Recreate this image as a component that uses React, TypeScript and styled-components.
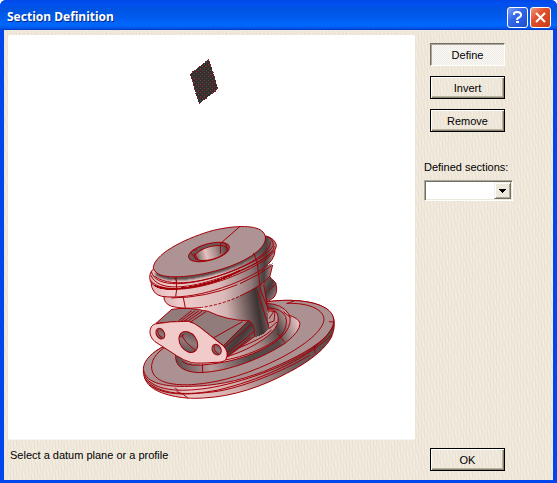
import React from "react";
import styled, { createGlobalStyle, css } from "styled-components";

const GlobalStyle = createGlobalStyle`
  * { box-sizing: border-box; }
  body { margin: 0; background: #fff; font: 11px/14px "Liberation Sans", Arial, sans-serif; color: #000; }
`;

const texture = css`
  background-color: #eee7db;
  background-image:
    repeating-linear-gradient(90deg, rgba(232, 214, 194, 0.3) 0 1px, transparent 1px 3px),
    repeating-linear-gradient(75deg, rgba(255, 252, 232, 0.35) 0 1px, transparent 1px 4px);
`;

const Dialog = styled.main`
  min-height: 100vh;
  display: flex;
  flex-direction: column;
  padding: 0 4px 4px;
  background: #0048ee;
  border-radius: 6px 6px 0 0;
`;

const TitleBar = styled.header`
  height: 30px;
  margin: 0 -4px;
  padding: 4px 6px 0 7px;
  display: flex;
  align-items: center;
  gap: 2px;
  border-radius: 6px 6px 0 0;
  background: linear-gradient(#0048e8 0, #0050f0 4px, #0054e2 9px, #005cee 18px, #0068ff 25px, #0058ea 28px, #0038c8 30px);
`;

const Title = styled.h1`
  flex: 1;
  margin: 0;
  color: #fff;
  font: bold 12px/16px "Noto Sans", "Open Sans", sans-serif;
  text-shadow: 1px 1px 0 #062b88;
`;

const CaptionButton = styled.button<{ $close?: boolean }>`
  width: 21px;
  height: 21px;
  padding: 0;
  display: grid;
  place-items: center;
  border: 1px solid #fff;
  border-radius: 3px;
  background: ${({ $close }) =>
    $close
      ? "linear-gradient(135deg, #f09a80, #e0502c 40%, #c83a14)"
      : "linear-gradient(135deg, #7ca0f8, #3468e8 40%, #1c50d4)"};
`;

const Client = styled.div`
  flex: 1;
  display: grid;
  grid-template-columns: 1fr 138px;
  grid-template-rows: 1fr 40px;
  padding: 5px 0 0 4px;
  ${texture}
`;

const Viewport = styled.section`
  background: #fff;
  border-radius: 2px;
  border-bottom: 1px solid #f8f6f2;
  min-height: 0;
`;

const Drawing = styled.svg`
  display: block;
  width: 100%;
  height: 100%;
`;

const SidePanel = styled.aside`
  display: flex;
  flex-direction: column;
  align-items: flex-start;
  gap: 10px;
  padding: 8px 0 0 15px;
`;

const PushButton = styled.button<{ $pressed?: boolean }>`
  width: 75px;
  height: 23px;
  padding: 0;
  color: #000;
  font: inherit;
  ${texture}
  border: 1px solid #000;
  box-shadow: inset 1px 1px 0 #fff, inset -1px -1px 0 #85816e, inset -2px -2px 0 #b8b4a0;
  ${({ $pressed }) =>
    $pressed &&
    css`
      background: repeating-conic-gradient(#ece9e4 0 25%, #fcfbf8 0 50%) 0 0 / 2px 2px;
      border-color: #716f64 #fff #fff #716f64;
      box-shadow: inset 1px 1px 0 #aca899, inset -1px -1px 0 #f6f3ea;
    `}
`;

const SectionField = styled.div`
  display: flex;
  flex-direction: column;
  gap: 6px;
  margin: 18px 0 0 -6px;
`;

const SelectFrame = styled.div`
  display: grid;
  grid-template-columns: 1fr 17px;
  width: 89px;
  height: 21px;
  border: 1px solid;
  border-color: #aca899 #fff #fff #aca899;
  box-shadow: inset 1px 1px 0 #716f64, inset -1px -1px 0 #ece9d8;
  background: #fff;
  padding: 1px;
`;

const SectionSelect = styled.select`
  appearance: none;
  grid-area: 1 / 1 / 2 / 3;
  border: 0;
  background: transparent;
  font: inherit;
  padding: 0 18px 0 3px;
  min-width: 0;
`;

const DropArrow = styled.span`
  grid-area: 1 / 2 / 2 / 3;
  pointer-events: none;
  display: grid;
  place-items: center;
  background: #eee7db;
  border: 1px solid;
  border-color: #f5f0e5 #716f64 #716f64 #f5f0e5;
  box-shadow: inset 1px 1px 0 #fff, inset -1px -1px 0 #aca899;
`;

const Status = styled.p`
  margin: 0;
  padding: 8px 2px;
`;

const Footer = styled.footer`
  padding: 8px 0 0 15px;
`;

function Model() {
  return (
    <Drawing viewBox="8 35 407 404" role="img" aria-label="Flanged valve body with datum plane">
      <defs>
        <pattern id="mesh" width="4" height="4" patternUnits="userSpaceOnUse">
          <rect width="4" height="4" fill="#37302f" />
          <path d="M0 0h1v1H0zM2 2h1v1H2z" fill="#554b4a" />
        </pattern>
        <linearGradient id="cyl" x1="0" x2="1">
          <stop offset="0" stopColor="#d9b5b5" />
          <stop offset=".15" stopColor="#f0cccc" />
          <stop offset=".55" stopColor="#dcbaba" />
          <stop offset=".8" stopColor="#927a7a" />
          <stop offset=".92" stopColor="#4b3e3e" />
          <stop offset="1" stopColor="#b69696" />
        </linearGradient>
        <linearGradient id="neck" gradientUnits="userSpaceOnUse" x1="200" y1="270" x2="395" y2="240">
          <stop offset="0" stopColor="#edcaca" />
          <stop offset=".3" stopColor="#d4b2b2" />
          <stop offset=".6" stopColor="#756161" />
          <stop offset=".78" stopColor="#3d3232" />
          <stop offset="1" stopColor="#a08484" />
        </linearGradient>
        <linearGradient id="disc" x1="0" x2="1">
          <stop offset="0" stopColor="#ad8f8f" />
          <stop offset=".25" stopColor="#edc8c8" />
          <stop offset=".5" stopColor="#d0abab" />
          <stop offset=".8" stopColor="#705d5d" />
          <stop offset="1" stopColor="#5a4747" />
        </linearGradient>
        <linearGradient id="side" x1="0" y1="0" x2="1" y2="1">
          <stop offset="0" stopColor="#8c7474" />
          <stop offset=".5" stopColor="#463a3a" />
          <stop offset="1" stopColor="#b49595" />
        </linearGradient>
        <linearGradient id="fillet" gradientUnits="userSpaceOnUse" x1="105" y1="430" x2="480" y2="310">
          <stop offset="0" stopColor="#594949" />
          <stop offset=".25" stopColor="#b99b9b" />
          <stop offset=".55" stopColor="#584949" />
          <stop offset=".8" stopColor="#574848" />
          <stop offset="1" stopColor="#eccaca" />
        </linearGradient>
        <linearGradient id="ring" gradientUnits="userSpaceOnUse" x1="130" y1="430" x2="450" y2="280">
          <stop offset="0" stopColor="#b89999" />
          <stop offset=".3" stopColor="#e8c5c5" />
          <stop offset=".65" stopColor="#a38888" />
          <stop offset=".85" stopColor="#544545" />
          <stop offset="1" stopColor="#d7b3b3" />
        </linearGradient>
        <linearGradient id="bore" x1="0" x2="1">
          <stop offset="0" stopColor="#665353" />
          <stop offset=".35" stopColor="#e5c1c1" />
          <stop offset=".6" stopColor="#b39494" />
          <stop offset="1" stopColor="#4e4040" />
        </linearGradient>
        <linearGradient id="drill" x1="0" y1="1" x2="1" y2="0">
          <stop offset="0" stopColor="#514343" />
          <stop offset=".5" stopColor="#927a7a" />
          <stop offset="1" stopColor="#584848" />
        </linearGradient>
        <filter id="soft" x="-10%" y="-30%" width="120%" height="160%">
          <feGaussianBlur stdDeviation="3" />
        </filter>
      </defs>

      <g shapeRendering="crispEdges">
        <path d="M209 59L190 74L199 104L218 89Z" fill="url(#mesh)" />
        <path d="M209 59L190 74L199 104L218 89Z" fill="none" stroke="#b70d16" strokeDasharray="1 3" />
        <path d="M196 72L211 64M194 80L214 74M198 85L215 82M198 92L213 87M200 98L207 93" stroke="#b70d16" strokeDasharray="1 4" />
      </g>

      <g transform="translate(140 220) scale(.33333)" fill="none" stroke="#a30008" strokeWidth="3" strokeLinejoin="round" shapeRendering="crispEdges">
        {/* base disc */}
        <path fill="url(#disc)" d="M10 455C12 425 35 395 75 378L378 246C440 236 520 240 558 265C590 287 586 320 575 350C555 390 500 430 440 460C370 498 280 530 190 534C120 539 60 522 35 502Q12 485 10 455Z" />
        <path fill="#ab9191" d="M10 445C12 422 35 395 75 378L378 246C440 236 520 240 558 265C592 287 586 320 555 352C510 395 430 430 370 455C290 485 220 498 150 499C60 502 13 484 10 445Z" />
        <path d="M78 380C45 400 33 425 35 445C40 485 90 497 155 494C250 488 340 455 420 415C500 373 550 330 552 298C550 265 500 248 440 250" />
        <path d="M12 465C40 515 120 516 200 505C310 488 430 440 500 398Q558 360 582 315M14 475C55 528 145 527 235 510C350 482 485 428 575 345M28 495C80 530 145 524 225 515C300 505 430 455 510 405M110 515L130 523L144 535M105 503L116 514M524 376L525 400M567 305L583 306M440 251L462 243" />

        {/* boss around the neck */}
        <path fill="url(#fillet)" d="M107 405Q103 453 175 458C270 456 375 410 435 370Q480 335 480 310Q475 294 445 285L380 260Z" />
        <path stroke="none" fill="url(#ring)" d="M120 410Q145 441 215 432C320 420 405 375 435 340Q460 305 445 280Q425 252 380 250L250 390Z" />
        <path d="M125 423Q145 443 215 432C320 420 405 375 435 340Q460 305 445 280Q425 252 380 250M240 422C320 412 395 375 425 345Q445 315 437 290Q425 265 384 263" />
        <path fill="#b29797" d="M258 411C330 390 388 350 405 325Q420 303 412 282Q405 267 380 267L345 330Z" />
        <path d="M258 400C310 378 370 355 395 330M384 272L405 275L402 303L385 309M387 296L401 275M412 340L435 368M187 432L188 457M430 275L452 293" />

        {/* side lug */}
        <path fill="url(#side)" d="M384 163Q394 177 407 188Q415 215 402 232L382 246L365 203ZM386 211L406 194" />

        {/* neck */}
        <path fill="url(#neck)" stroke="none" d="M185 263L370 175L388 326Q370 347 340 353L260 325Z" />
        <path d="M352 213L388 326L412 305M360 207L384 265M371 193L385 278" />

        {/* flange block */}
        <path fill="#927b7b" d="M48 310L95 268Q145 260 205 274Q256 300 328 303L252 378L180 322Q160 307 140 303Z" />
        <path fill="url(#side)" d="M250 377L324 303Q345 306 343 350L260 412Q266 397 250 377Z" />
        <path d="M115 303L155 272M123 303L166 272M132 304L177 272M141 305L187 273M150 307L198 275M220 354L307 305M254 382L334 313M264 398L342 335M262 410L333 350" />
        <path fill="#f1caca" d="M45 312Q90 303 145 304Q165 309 180 322L250 378Q268 396 258 418Q250 428 225 427Q180 431 155 428Q130 421 110 407L45 365Q28 350 30 332Q33 315 45 312Z" />
        <g fill="url(#drill)">
          <ellipse cx="61" cy="341" rx="12" ry="17" transform="rotate(-28 61 341)" />
          <ellipse cx="145" cy="366" rx="25" ry="34" transform="rotate(-35 145 366)" />
          <ellipse cx="230" cy="389" rx="13" ry="17" transform="rotate(-28 230 389)" />
        </g>
        <path d="M54 329Q51 345 67 353M126 343Q129 363 168 393M223 376Q219 391 236 403M121 351L133 343" />

        {/* upper body */}
        <path fill="url(#cyl)" stroke="none" d="M72 225Q70 250 95 259Q130 268 180 263C270 250 360 205 390 168L398 130Z" />
        <path d="M72 228Q70 250 95 259Q130 268 180 263M300 228C345 206 375 188 390 168L398 135" />
        <path d="M180 263Q245 254 300 228" strokeDasharray="9 5" />
        <path fill="url(#cyl)" d="M33 187Q35 222 65 229C160 242 300 192 370 145Q404 120 405 92Z" />
        <path fill="url(#cyl)" d="M42 145Q24 160 31 184Q45 211 105 208C205 207 325 155 382 115Q410 92 409 75Q404 55 378 48Z" />
        <path stroke="#574848" strokeWidth="12" filter="url(#soft)" d="M48 159C95 196 230 160 300 128Q350 102 376 74" />
        <path fill="#ad9393" d="M40 140C50 95 150 50 220 31C290 15 350 15 369 36C395 66 350 109 270 139C190 168 90 180 55 162Q38 150 40 140Z" />
        <path d="M34 155C48 207 150 195 235 168C315 142 390 104 400 75Q399 57 382 51M33 166C54 218 150 204 240 174C330 144 407 105 402 78M44 169C100 211 230 177 308 139C357 115 392 90 391 65M32 181C58 221 178 207 245 177C330 144 392 106 397 92M108 169L110 208L107 230M130 233L136 264M341 98L352 130L361 207M102 171L111 184M300 191Q354 167 395 137M94 234Q199 233 292 194" />
        <path d="M44 197C95 224 240 188 300 151" strokeWidth="5" />

        {/* centre bore */}
        <ellipse cx="207" cy="96" rx="63" ry="25" transform="rotate(-15 207 96)" fill="#6c5858" />
        <ellipse cx="213" cy="99" rx="51" ry="19" transform="rotate(-15 213 99)" fill="url(#bore)" />
        <path d="M299 20L242 70L241 101M161 99L174 118M153 99L171 120M159 91L171 89M239 67Q263 67 260 85" />
      </g>
    </Drawing>
  );
}

export default function App() {
  return (
    <>
      <GlobalStyle />
      <Dialog>
        <TitleBar>
          <Title>Section Definition</Title>
          <CaptionButton aria-label="Help">
            <svg width="15" height="15" viewBox="0 0 15 15" fill="none" stroke="#fff" strokeWidth="2">
              <path d="M4 5V4Q4 2 7 2Q11 2 11 5Q11 7 8 8Q7 9 7 10M6 12H9" />
            </svg>
          </CaptionButton>
          <CaptionButton $close aria-label="Close">
            <svg width="15" height="15" viewBox="0 0 15 15" stroke="#fff" strokeWidth="2">
              <path d="M3 3L12 12M12 3L3 12" />
            </svg>
          </CaptionButton>
        </TitleBar>
        <Client>
          <Viewport><Model /></Viewport>
          <SidePanel>
            <PushButton $pressed aria-pressed="true">Define</PushButton>
            <PushButton>Invert</PushButton>
            <PushButton>Remove</PushButton>
            <SectionField>
              <label htmlFor="sections">Defined sections:</label>
              <SelectFrame>
                <SectionSelect id="sections"><option value="" /></SectionSelect>
                <DropArrow>
                  <svg width="7" height="4" viewBox="0 0 7 4" shapeRendering="crispEdges"><path d="M0 0H7L4 4H3Z" /></svg>
                </DropArrow>
              </SelectFrame>
            </SectionField>
          </SidePanel>
          <Status>Select a datum plane or a profile</Status>
          <Footer><PushButton>OK</PushButton></Footer>
        </Client>
      </Dialog>
    </>
  );
}
